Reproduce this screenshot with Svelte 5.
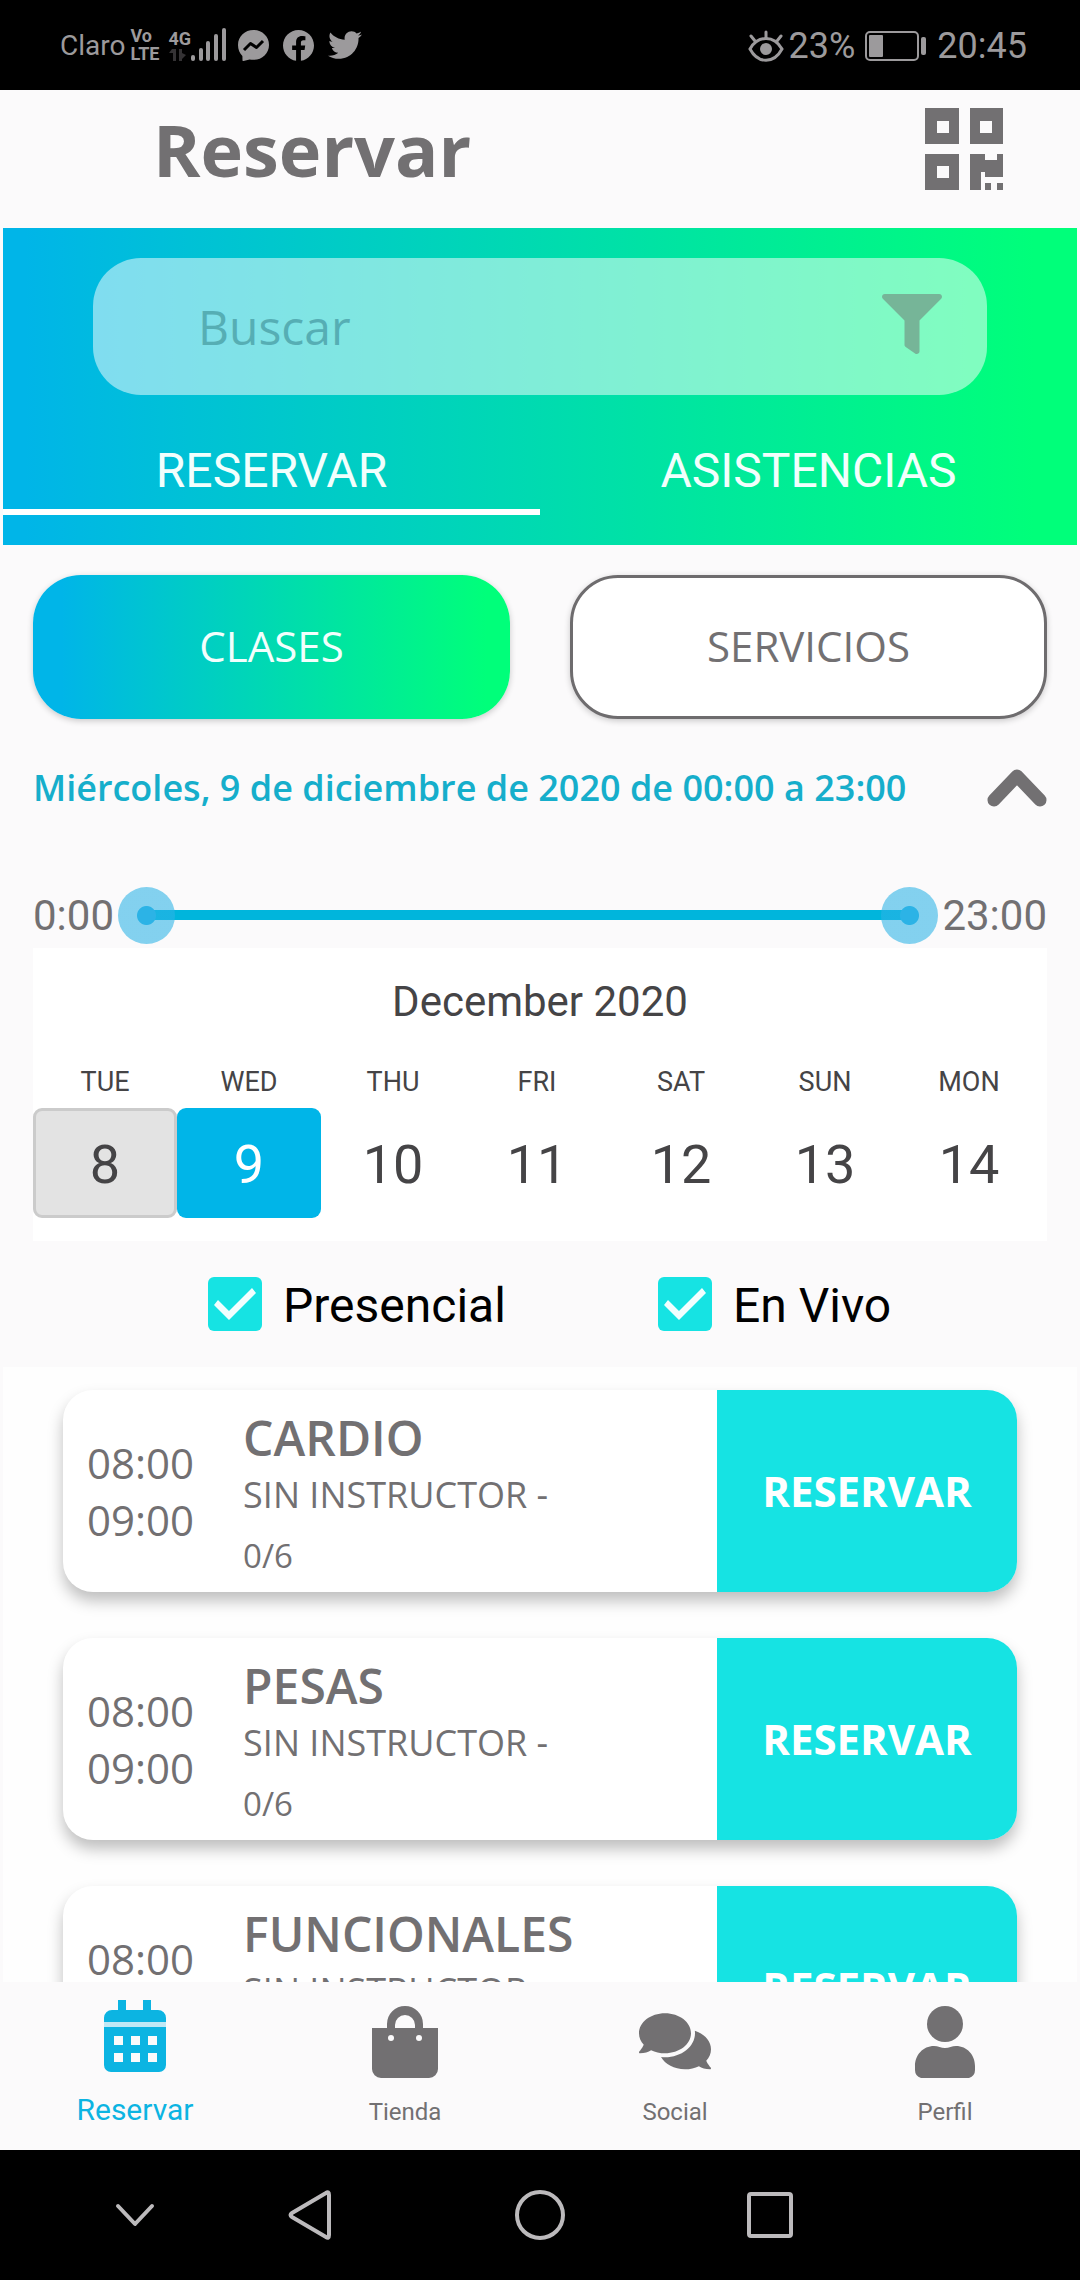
<script>
  let busqueda = "";
  let tab = "RESERVAR";
  let tipo = "CLASES";
  let desde = 0;
  let hasta = 23;
  let diaActual = 9;
  let presencial = true;
  let enVivo = true;

  const tabs = ["RESERVAR", "ASISTENCIAS"];
  const tipos = ["CLASES", "SERVICIOS"];

  const dias = [
    { nombre: "TUE", numero: 8, hoy: true },
    { nombre: "WED", numero: 9 },
    { nombre: "THU", numero: 10 },
    { nombre: "FRI", numero: 11 },
    { nombre: "SAT", numero: 12 },
    { nombre: "SUN", numero: 13 },
    { nombre: "MON", numero: 14 },
  ];

  const clases = [
    { nombre: "CARDIO", inicio: "08:00", fin: "09:00", cupo: "0/6" },
    { nombre: "PESAS", inicio: "08:00", fin: "09:00", cupo: "0/6" },
    { nombre: "FUNCIONALES", inicio: "08:00", fin: "09:00", cupo: "0/6" },
  ];

  const menu = ["Reservar", "Tienda", "Social", "Perfil"];
</script>

<div class="app">
  <div class="status">
    <div class="status-side">
      <span class="carrier">Claro</span>
      <span class="volte"><span>Vo</span><span>LTE</span></span>
      <span class="signal">
        <span class="network">
          <span>4G</span>
          <svg width="18" height="14" viewBox="0 0 18 14" fill="#343234">
            <path d="M4 1h4v12H5V5H1zM11 1h3v4l4 2-4 4v2h-3z" />
          </svg>
        </span>
        <svg width="36" height="34" viewBox="0 0 36 34" fill="currentColor">
          <rect x="0" y="27" width="4" height="6" rx="2" />
          <rect x="8" y="20" width="4" height="13" rx="2" />
          <rect x="15" y="13" width="4" height="20" rx="2" />
          <rect x="23" y="6" width="4" height="27" rx="2" />
          <rect x="31" y="0" width="4" height="33" rx="2" />
        </svg>
      </span>
      <span class="apps">
        <svg width="31" height="31" viewBox="0 0 31 31">
          <path fill="currentColor" d="M15.500 0C24 0 31 6.300 31 14.900S24 29.800 15.500 29.800c-1.300 0-2.700-.1-3.900-.4L5.500 31c-.7.200-1-.2-1-.8l-.1-4.300C1.700 23.200 0 19.300 0 14.900 0 6.300 7 0 15.500 0z" />
          <path fill="none" stroke="#000" stroke-width="3" stroke-linejoin="round" d="M6 20l6.500-6.500 6 4L25 11" />
        </svg>
        <svg width="31" height="31" viewBox="8 8 496 496" fill="currentColor">
          <path d="M504 256C504 119 393 8 256 8S8 119 8 256c0 123.780 90.690 226.380 209.250 245V327.690h-63V256h63v-54.640c0-62.150 37-96.480 93.670-96.480 27.140 0 55.520 4.840 55.520 4.840v61h-31.280c-30.800 0-40.410 19.120-40.410 38.730V256h68.780l-11 71.690h-57.780V501C413.310 482.380 504 379.780 504 256z" />
        </svg>
        <svg width="34" height="34" viewBox="0 0 512 512" fill="currentColor">
          <path d="M459.370 151.716c.325 4.548.325 9.097.325 13.645 0 138.720-105.583 298.558-298.558 298.558-59.452 0-114.680-17.219-161.137-47.106 8.447.974 16.568 1.299 25.340 1.299 49.055 0 94.213-16.568 130.274-44.832-46.132-.975-84.792-31.188-98.112-72.772 6.498.974 12.995 1.624 19.818 1.624 9.421 0 18.843-1.300 27.614-3.573-48.081-9.747-84.143-51.980-84.143-102.985v-1.299c13.969 7.797 30.214 12.670 47.431 13.319-28.264-18.843-46.781-51.005-46.781-87.391 0-19.492 5.197-37.360 14.294-52.954 51.655 63.675 129.300 105.258 216.365 109.807-1.624-7.797-2.599-15.918-2.599-24.040 0-57.828 46.782-104.934 104.934-104.934 30.213 0 57.502 12.670 76.670 33.137 23.715-4.548 46.456-13.320 66.599-25.340-7.798 24.366-24.366 44.833-46.132 57.827 21.117-2.273 41.584-8.122 60.426-16.243-14.292 20.791-32.161 39.308-52.628 54.253z" />
        </svg>
      </span>
    </div>
    <div class="status-side status-right">
      <svg width="36" height="32" viewBox="0 0 36 32">
        <g fill="none" stroke="currentColor" stroke-width="3" stroke-linecap="round">
          <path d="M2 19c8-14 24-14 32 0-8 15-24 15-32 0z" />
          <path d="M18 2v6M3 6l4 5M33 6l-4 5" />
        </g>
        <circle cx="18" cy="19" r="6" fill="currentColor" />
      </svg>
      <span>23%</span>
      <svg class="battery" width="62" height="30" viewBox="0 0 62 30">
        <rect x="1" y="1" width="52" height="28" rx="4" fill="none" stroke="currentColor" stroke-width="2" />
        <rect x="4" y="4" width="14" height="22" rx="1" fill="currentColor" />
        <rect x="56" y="6" width="5" height="18" rx="2" fill="currentColor" />
      </svg>
      <span>20:45</span>
    </div>
  </div>

  <header class="header">
    <h1>Reservar</h1>
    <button class="icon-btn" aria-label="Código QR">
      <svg width="78" height="82" viewBox="0 0 78 82" fill="currentColor" fill-rule="evenodd">
        <path d="M0 0h34v36H0zM12 13v12h12V13z" />
        <path d="M45 0h33v36H45zM55 13v12h12V13z" />
        <path d="M0 46h34v36H0zM12 58v12h12V58z" />
        <path d="M45 46h15v6h12v-6h6v23H60v-5h-4v18H45zM60 75h6v7h-6zM72 75h6v7h-6z" />
      </svg>
    </button>
  </header>

  <section class="hero">
    <div class="search">
      <input type="text" placeholder="Buscar" aria-label="Buscar" bind:value={busqueda} />
      <button class="icon-btn filter" aria-label="Filtrar">
        <svg width="60" height="60" viewBox="0 0 512 512" fill="currentColor">
          <path d="M487.976 0H24.028C2.710 0-8.047 25.866 7.058 40.971L192 225.941V432c0 7.831 3.821 15.170 10.237 19.662l80 55.980C298.020 518.690 320 507.493 320 487.980V225.941l184.947-184.970C520.021 25.896 509.338 0 487.976 0z" />
        </svg>
      </button>
    </div>
    <div class="tabs">
      {#each tabs as nombre}
        <button class="tab" class:active={tab === nombre} on:click={() => (tab = nombre)}>
          {nombre}
        </button>
      {/each}
    </div>
  </section>

  <section class="filters">
    <div class="types">
      {#each tipos as nombre}
        <button class="type" class:active={tipo === nombre} on:click={() => (tipo = nombre)}>
          {nombre}
        </button>
      {/each}
    </div>

    <div class="date">
      <span>Miércoles, 9 de diciembre de 2020 de 00:00 a 23:00</span>
      <button class="icon-btn" aria-label="Ocultar filtros">
        <svg width="60" height="38" viewBox="0 0 60 38">
          <path d="M7 31L30 7l23 24" fill="none" stroke="currentColor" stroke-width="13" stroke-linecap="round" stroke-linejoin="round" />
        </svg>
      </button>
    </div>

    <div class="hours">
      <span>{desde}:00</span>
      <div class="range">
        <div class="bar"></div>
        <input type="range" min="0" max="23" aria-label="Desde" bind:value={desde} />
        <input type="range" min="0" max="23" aria-label="Hasta" bind:value={hasta} />
      </div>
      <span>{hasta}:00</span>
    </div>

    <div class="calendar">
      <div class="month">December 2020</div>
      <div class="week">
        {#each dias as dia (dia.numero)}
          <div class="day">
            <span>{dia.nombre}</span>
            <button
              class:today={dia.hoy}
              class:selected={diaActual === dia.numero}
              on:click={() => (diaActual = dia.numero)}
            >
              {dia.numero}
            </button>
          </div>
        {/each}
      </div>
    </div>
  </section>

  <div class="checks">
    <label><input type="checkbox" bind:checked={presencial} />Presencial</label>
    <label><input type="checkbox" bind:checked={enVivo} />En Vivo</label>
  </div>

  <main class="list">
    {#each clases as clase (clase.nombre)}
      <article class="card">
        <div class="time">
          <span>{clase.inicio}</span>
          <span>{clase.fin}</span>
        </div>
        <div class="info">
          <h2>{clase.nombre}</h2>
          <p>SIN INSTRUCTOR -</p>
          <p class="quota">{clase.cupo}</p>
        </div>
        <button class="book">RESERVAR</button>
      </article>
    {/each}
  </main>

  <nav class="menu">
    {#each menu as item, i}
      <a href="#{item.toLowerCase()}" class:active={i === 0}>
        {#if item === "Reservar"}
          <svg width="72" height="72" viewBox="0 0 72 72" fill="currentColor">
            <path d="M19 10V0h8v10h17V0h8v10h7a8 8 0 0 1 8 8v4H5v-4a8 8 0 0 1 8-8z" />
            <path d="M5 22h62v6H5z" opacity="0.25" />
            <path fill-rule="evenodd" d="M5 27h62v38a7 7 0 0 1-7 7H12a7 7 0 0 1-7-7zM15 36v9h9v-9zM32 36v9h9v-9zM49 36v9h9v-9zM15 53v9h9v-9zM32 53v9h9v-9zM49 53v9h9v-9z" />
          </svg>
        {:else if item === "Tienda"}
          <svg width="72" height="72" viewBox="0 0 72 72" fill="currentColor">
            <path fill-rule="evenodd" d="M3 22h15v-4a18 18 0 0 1 36 0v4h15v41a9 9 0 0 1-9 9H12a9 9 0 0 1-9-9zM26 22h20v-3a10 10 0 0 0-20 0z" />
            <circle cx="22" cy="32" r="3" fill="#fbfafb" />
            <circle cx="50" cy="32" r="3" fill="#fbfafb" />
          </svg>
        {:else if item === "Social"}
          <svg width="72" height="72" viewBox="0 -26 576 576" fill="currentColor">
            <path d="M416 192c0-88.400-93.100-160-208-160S0 103.600 0 192c0 34.300 14.100 65.900 38 92-13.400 30.200-35.500 54.200-35.800 54.500-2.200 2.300-2.800 5.700-1.500 8.700S4.800 352 8 352c36.600 0 66.900-12.300 88.700-25 32.200 15.700 70.300 25 111.300 25 114.900 0 208-71.600 208-160zm122 220c23.900-26 38-57.700 38-92 0-66.900-53.500-124.200-129.300-148.100.9 6.600 1.300 13.300 1.300 20.100 0 105.900-107.700 192-240 192-10.800 0-21.300-.8-31.700-1.900C207.800 439.600 281.800 480 368 480c41 0 79.100-9.200 111.300-25 21.800 12.700 52.100 25 88.700 25 3.200 0 6.100-1.900 7.300-4.800 1.300-2.900.7-6.300-1.500-8.700-.3-.2-22.400-24.200-35.800-54.500z" />
          </svg>
        {:else}
          <svg width="72" height="72" viewBox="0 0 72 72" fill="currentColor">
            <circle cx="36" cy="18" r="18" />
            <path d="M6 60c0-11 8-20 19-20 4 0 7 2 11 2s7-2 11-2c11 0 19 9 19 20v4q0 6-6 8H12q-6-2-6-8z" />
          </svg>
        {/if}
        <span>{item}</span>
      </a>
    {/each}
  </nav>

  <div class="system">
    <span></span>
    <button class="icon-btn" aria-label="Ocultar barra">
      <svg width="40" height="24" viewBox="0 0 40 24">
        <path d="M3 3l17 18L37 3" />
      </svg>
    </button>
    <button class="icon-btn" aria-label="Atrás">
      <svg width="44" height="50" viewBox="0 0 44 50">
        <path d="M38 3Q41 1 41 5v40q0 4-3 2L4 27q-3-2 0-4z" />
      </svg>
    </button>
    <button class="icon-btn" aria-label="Inicio">
      <svg width="50" height="50" viewBox="0 0 50 50">
        <circle cx="25" cy="25" r="23" />
      </svg>
    </button>
    <button class="icon-btn" aria-label="Recientes">
      <svg width="46" height="46" viewBox="0 0 46 46">
        <rect x="2" y="2" width="42" height="42" rx="2" />
      </svg>
    </button>
  </div>
</div>

<style>
  :global(body) {
    margin: 0;
  }

  .app {
    display: flex;
    flex-direction: column;
    height: 100vh;
    background: #fbfafb;
    color: #727072;
    font-family: "Open Sans", "Noto Sans", sans-serif;
  }

  .app > * {
    flex-shrink: 0;
  }

  button {
    margin: 0;
    padding: 0;
    border: none;
    background: none;
    color: inherit;
    font: inherit;
    cursor: pointer;
  }

  svg {
    display: block;
  }

  .icon-btn {
    display: flex;
    align-items: center;
    justify-content: center;
  }

  /* barra de estado */
  .status {
    display: flex;
    justify-content: space-between;
    align-items: center;
    height: 90px;
    padding: 0 53px 0 60px;
    background: #000;
    color: #9c9a9c;
    font-family: Roboto, sans-serif;
  }

  .status-side {
    display: flex;
    align-items: center;
    gap: 5px;
  }

  .status-right {
    padding-top: 2px;
    font-size: 36px;
  }

  .battery {
    margin: 0 5px;
  }

  .carrier {
    font-size: 28px;
  }

  .volte,
  .network {
    display: flex;
    flex-direction: column;
    font-size: 18px;
    font-weight: 700;
    line-height: 18px;
  }

  .signal {
    display: flex;
    align-items: flex-end;
    margin-left: 4px;
  }

  .apps {
    display: flex;
    align-items: center;
    gap: 14px;
    margin-left: 6px;
  }

  .header {
    display: flex;
    justify-content: space-between;
    align-items: center;
    height: 138px;
    padding: 0 77px 20px 153px;
    box-sizing: border-box;
  }

  h1 {
    margin: 0;
    font-size: 72px;
    font-weight: 700;
    line-height: 90px;
  }

  /* buscador y pestañas */
  .hero {
    margin: 0 3px;
    padding: 30px 0;
    background: linear-gradient(90deg, #00b5e8 2%, #00ff7a 96%);
  }

  .search {
    display: flex;
    align-items: center;
    height: 137px;
    margin: 0 90px;
    padding: 0 45px 0 105px;
    box-sizing: border-box;
    border-radius: 48px;
    background: rgba(255, 255, 255, 0.5);
  }

  .search input {
    flex: 1;
    min-width: 0;
    padding: 0;
    border: none;
    outline: none;
    background: none;
    color: #4f9fa3;
    font-family: inherit;
    font-size: 48px;
    line-height: 66px;
  }

  .search input::placeholder {
    color: #56aeb4;
    opacity: 1;
  }

  .filter {
    padding-bottom: 6px;
    color: #76b598;
  }

  .tabs {
    display: grid;
    grid-template-columns: 1fr 1fr;
  }

  .tab {
    padding: 47px 0 10px;
    border-bottom: 6px solid transparent;
    color: #f2fffd;
    font-family: Roboto, sans-serif;
    font-size: 48px;
    line-height: 57px;
  }

  .tab.active {
    border-color: #fff;
  }

  /* filtros */
  .filters {
    padding: 30px 33px 0;
  }

  .types {
    display: grid;
    grid-template-columns: 1fr 1fr;
    gap: 60px;
  }

  .type {
    height: 144px;
    padding-bottom: 3px;
    border: 3px solid #6e6c6e;
    border-radius: 48px;
    background: #fff;
    box-shadow: 0 2px 6px rgba(0, 0, 0, 0.2);
    font-size: 42px;
  }

  .type.active {
    border: none;
    background: linear-gradient(90deg, #00b5e8 6%, #00ff7a 95%);
    color: #f2fffd;
  }

  .date {
    display: flex;
    justify-content: space-between;
    align-items: center;
    margin-top: 45px;
    color: #16aecb;
    font-size: 36px;
    font-weight: 600;
    line-height: 48px;
  }

  .date .icon-btn {
    color: #727072;
  }

  .hours {
    display: flex;
    align-items: center;
    gap: 4px;
    height: 60px;
    margin: 73px 0 3px;
    font-family: Roboto, sans-serif;
    font-size: 42px;
  }

  .range {
    flex: 1;
    display: grid;
    align-items: center;
  }

  .range > * {
    grid-area: 1 / 1;
  }

  .bar {
    height: 10px;
    margin: 0 28px;
    background: #00b5dc;
  }

  .range input {
    width: 100%;
    height: 58px;
    margin: 0;
    appearance: none;
    background: none;
    pointer-events: none;
  }

  .range input::-webkit-slider-thumb {
    appearance: none;
    width: 57px;
    height: 57px;
    border-radius: 50%;
    background: radial-gradient(circle, #2cb3e6 9px, rgba(44, 179, 230, 0.58) 10px);
    pointer-events: auto;
  }

  .calendar {
    padding: 30px 0 23px;
    background: #fff;
    color: #454446;
    font-family: Roboto, sans-serif;
    text-align: center;
  }

  .month {
    font-size: 42px;
    line-height: 48px;
  }

  .week {
    display: grid;
    grid-template-columns: repeat(7, 1fr);
    margin: 40px 6px 0 0;
  }

  .day {
    display: flex;
    flex-direction: column;
    gap: 10px;
    font-size: 27px;
    line-height: 32px;
  }

  .day button {
    height: 110px;
    padding-top: 4px;
    border-radius: 9px;
    font-size: 54px;
  }

  .day .today {
    border: 3px solid #cbcbcb;
    background: #e3e3e3;
  }

  .day .selected {
    border: none;
    background: #00b5e8;
    color: #fff;
  }

  .checks {
    display: grid;
    grid-template-columns: 450fr 422fr;
    padding: 36px 0 36px 208px;
    color: #000;
    font-family: Roboto, sans-serif;
    font-size: 48px;
    line-height: 58px;
  }

  .checks label {
    display: flex;
    align-items: flex-start;
    gap: 21px;
    height: 54px;
  }

  .checks input {
    width: 54px;
    height: 54px;
    margin: 0;
    appearance: none;
    border-radius: 6px;
    background: #d8d8da;
  }

  .checks input:checked {
    background: #16e3e3;
  }

  .checks input:checked::before {
    content: "";
    display: block;
    height: 54px;
    background: #f2ffff;
    clip-path: polygon(6px 28px, 21px 43px, 48px 16px, 44px 11px, 21px 34px, 10px 23px);
  }

  /* listado */
  .app > .list {
    flex: 1;
    min-height: 0;
    display: flex;
    flex-direction: column;
    gap: 46px;
    margin: 0 3px;
    padding: 23px 60px 0;
    background: #fefefe;
    overflow-y: auto;
    scrollbar-width: none;
  }

  .card {
    flex-shrink: 0;
    display: flex;
    height: 202px;
    border-radius: 30px;
    background: #fff;
    box-shadow: 0 9px 15px rgba(0, 0, 0, 0.25);
  }

  .time {
    display: flex;
    flex-direction: column;
    justify-content: center;
    padding: 0 49px 0 24px;
    font-size: 42px;
    line-height: 57px;
  }

  .info {
    flex: 1;
    padding-top: 15px;
  }

  .info h2 {
    margin: 0;
    font-size: 48px;
    font-weight: 600;
    line-height: 66px;
  }

  .info p {
    margin: 0;
    font-size: 36px;
    line-height: 48px;
  }

  .info .quota {
    margin-top: 13px;
    font-size: 33px;
  }

  .book {
    width: 300px;
    padding-bottom: 2px;
    border-radius: 0 30px 30px 0;
    background: #16e3e3;
    color: #fff;
    font-size: 42px;
    font-weight: 700;
  }

  /* menú inferior */
  .menu {
    display: grid;
    grid-template-columns: repeat(4, 1fr);
    height: 168px;
    background: #fbfafb;
    font-family: Roboto, sans-serif;
  }

  .menu a {
    display: flex;
    flex-direction: column;
    align-items: center;
    justify-content: flex-end;
    gap: 16px;
    padding-bottom: 20px;
    color: #727072;
    font-size: 24px;
    line-height: 36px;
    text-decoration: none;
  }

  .menu .active {
    padding-bottom: 22px;
    gap: 20px;
    color: #0cb4e2;
    font-size: 30px;
  }

  .system {
    display: grid;
    grid-template-columns: 75fr 120fr 230fr 230fr 230fr 195fr;
    height: 130px;
    background: #000;
  }

  .system svg {
    fill: none;
    stroke: #bcbabc;
    stroke-width: 4;
    stroke-linecap: round;
    stroke-linejoin: round;
  }
</style>
